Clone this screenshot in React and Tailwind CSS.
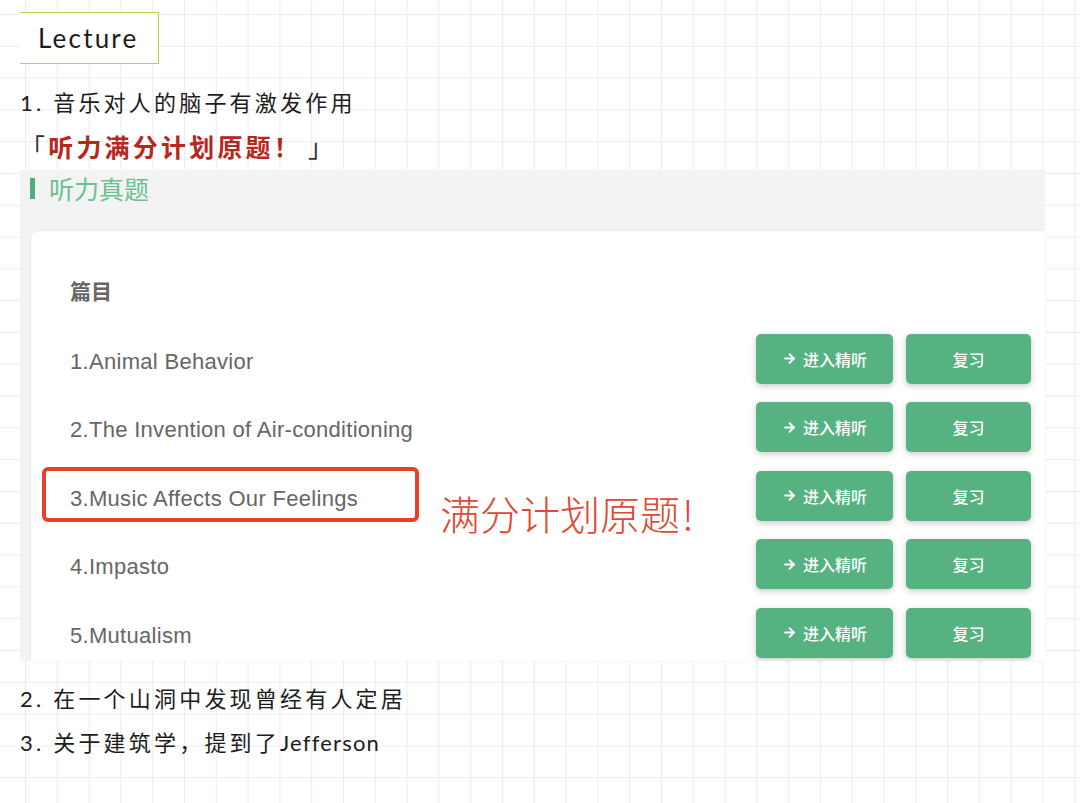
import { ArrowRight } from "lucide-react";

const topics = [
  "1.Animal Behavior",
  "2.The Invention of Air-conditioning",
  "3.Music Affects Our Feelings",
  "4.Impasto",
  "5.Mutualism",
];

function TopicRow({ title }) {
  return (
    <div className="flex h-[68.5px] items-center justify-between">
      <span className="pt-[5px] font-['Liberation_Sans',sans-serif] text-[22px] tracking-[0.3px] text-[#666666]">{title}</span>
      <div className="flex gap-[13px]">
        <button className="flex h-[50px] w-[137px] items-center justify-center gap-[6px] rounded-[5px] bg-[#56b281] text-[16px] font-medium text-white shadow-[0_2px_6px_rgba(0,0,0,0.22)]">
          <ArrowRight size={15} strokeWidth={3} />
          进入精听
        </button>
        <button className="flex h-[50px] w-[125px] items-center justify-center rounded-[5px] bg-[#56b281] text-[16px] font-medium text-white shadow-[0_2px_6px_rgba(0,0,0,0.22)]">
          复习
        </button>
      </div>
    </div>
  );
}

export default function App() {
  return (
    <div className="h-[803px] w-[1080px] overflow-hidden bg-white bg-[linear-gradient(to_right,#ececec_1px,transparent_1px),linear-gradient(to_bottom,#ececec_1px,transparent_1px)] bg-[size:31.8px_31.8px] bg-[position:25px_14px] font-['Lato','Noto_Sans_CJK_SC',sans-serif] text-[#1c1c1c]">
      <div className="pl-[20px] pt-[12px]">
        <div className="flex h-[52px] w-[139px] items-center border-y border-r border-[#c8cc47] bg-white pl-[18px] text-[26px] tracking-[2.2px]">
          Lecture
        </div>
      </div>

      <div className="mt-[17px] pl-[20px] text-[22px] leading-[44px] tracking-[3.2px]">
        1. 音乐对人的脑子有激发作用
      </div>
      <div className="pl-[20px] text-[25px] leading-[44px] tracking-[3.2px] text-[#333333]">
        「<span className="font-bold text-[#b8261d]">听力满分计划原题！</span><span className="ml-[6px]">」</span>
      </div>

      <div className="ml-[20px] mt-[1px] w-[1025px] font-['Noto_Sans_CJK_SC',sans-serif]">
        <div className="flex h-[61px] items-start bg-[#f3f3f3] pl-[10px] pt-[4px]">
          <div className="flex items-center gap-[14px]">
            <span className="h-[21px] w-[5px] bg-[#4fae7b]"></span>
            <span className="text-[25px] leading-[28px] text-[#6cbf91]">听力真题</span>
          </div>
        </div>
        <div className="flex h-[430px] bg-[#f3f3f3] pl-[11px]">
          <div className="relative h-[430px] flex-1 overflow-hidden rounded-tl-[8px] bg-white pl-[39px] pr-[14px] pt-[25px] shadow-[0_0_4px_rgba(0,0,0,0.06)]">
            <div className="flex h-[68.5px] items-center">
              <span className="text-[21px] font-bold text-[#666666]">篇目</span>
            </div>
            {topics.map((t) => (
              <TopicRow key={t} title={t} />
            ))}

            <div className="absolute left-[11px] top-[236px] h-[55px] w-[377px] rounded-[6px] border-[4px] border-[#e5402a]"></div>
            <div className="absolute left-[409px] top-[262px] flex items-baseline text-[40px] font-light leading-[40px] text-[#e24833]">
              满分计划原题<span className="ml-[2px]">!</span>
            </div>
          </div>
        </div>
      </div>

      <div className="mt-[16px] pl-[20px] text-[22px] leading-[44px] tracking-[3.2px]">
        2. 在一个山洞中发现曾经有人定居
      </div>
      <div className="pl-[20px] text-[22px] leading-[43px] tracking-[3.2px]">
        3. 关于建筑学，提到了<span className="tracking-[1.2px]">Jefferson</span>
      </div>
    </div>
  );
}
